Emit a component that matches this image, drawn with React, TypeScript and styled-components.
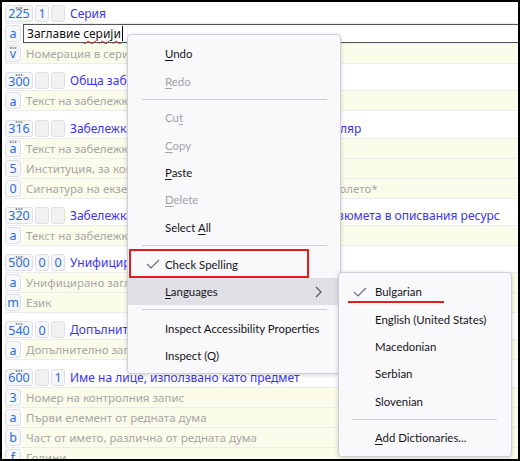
import React from "react";
import styled, { createGlobalStyle, css } from "styled-components";

const GlobalStyle = createGlobalStyle`
  html, body { margin: 0; padding: 0; background: #fff; }
  body { font-family: "Noto Sans", "Open Sans", sans-serif; }
  * { box-sizing: border-box; }
`;

const Frame = styled.div`
  position: relative;
  width: 520px;
  height: 461px;
  border: 2px solid #000;
  overflow: hidden;
  background: #fff;
`;

const Editor = styled.div`
  display: flex;
  flex-direction: column;
  padding: 2px 0 0 3px;
`;

const Group = styled.div`
  display: flex;
  flex-direction: column;
  & + & { margin-top: 7.3px; }
`;

const Row = styled.div`
  display: flex;
  align-items: center;
  gap: 2px;
  height: 20px;
  border-bottom: 1px solid #ececec;
`;

const Tag = styled.span<{ $w?: number; $dots?: boolean; $empty?: boolean }>`
  position: relative;
  display: flex;
  align-items: center;
  justify-content: center;
  flex: none;
  width: ${(p) => p.$w ?? 16}px;
  height: 17px;
  padding-top: 2px;
  border: 1px solid #dcdfe5;
  border-radius: 3px;
  background: ${(p) => (p.$empty ? "#f2f2f2" : "#f5f7fa")};
  color: #2f6bd6;
  font-size: 12.5px;
  line-height: 1;
  ${(p) =>
    p.$dots &&
    css`
      &::before {
        content: "";
        position: absolute;
        top: 0.5px;
        left: 50%;
        width: 8px;
        height: 2px;
        margin-left: -4px;
        background: radial-gradient(circle, #7a7a7a 0.75px, transparent 1.1px) 0 0 / 2.7px 2px repeat-x;
      }
    `}
`;

const Title = styled.span`
  margin-left: 3px;
  color: #3a34f0;
  font-size: 12px;
  white-space: nowrap;
`;

const SubText = styled.span`
  flex: 1;
  align-self: stretch;
  display: flex;
  align-items: center;
  padding-left: 3px;
  background: #fcfcea;
  color: #a6a6a6;
  font-size: 11.5px;
  white-space: nowrap;
`;

const InputBox = styled.div`
  flex: 1;
  align-self: stretch;
  display: flex;
  align-items: center;
  margin-right: -4px;
  padding-left: 3px;
  border: 1px solid #555;
  background: #fff;
  color: #111;
  font-size: 12px;
  white-space: nowrap;
`;

const Misspelled = styled.span`
  text-decoration: underline wavy #e02020;
  text-decoration-thickness: 1px;
  text-underline-offset: 2px;
`;

const Caret = styled.span`
  display: inline-block;
  width: 1px;
  height: 15px;
  margin-left: 1px;
  background: #000;
`;

const Menu = styled.div<{ $x: number; $y: number; $w: number }>`
  position: absolute;
  left: ${(p) => p.$x}px;
  top: ${(p) => p.$y}px;
  width: ${(p) => p.$w}px;
  padding: 5px 0 4px;
  background: #f9f9fb;
  border: 1px solid #cfcfd8;
  border-radius: 4px;
  box-shadow: 0 1px 4px rgba(0, 0, 0, 0.18);
  font-family: Lato, "Noto Sans", sans-serif;
  font-size: 11.4px;
`;

const Item = styled.div<{ $disabled?: boolean; $hover?: boolean; $pad: number }>`
  position: relative;
  display: flex;
  align-items: center;
  height: 27.4px;
  padding-left: ${(p) => p.$pad}px;
  color: ${(p) => (p.$disabled ? "#a3a3a8" : "#15141a")};
  background: ${(p) => (p.$hover ? "#e0e0e6" : "transparent")};
  white-space: nowrap;
`;

const Label = styled.span`
  white-space: pre;
`;

const Key = styled.u`
  text-underline-offset: 2px;
`;

const Sep = styled.div<{ $l: number; $r: number }>`
  height: 1px;
  margin: 4px ${(p) => p.$r}px 4.3px ${(p) => p.$l}px;
  background: #cfcfd4;
`;

const CheckIcon = styled.svg<{ $left: number }>`
  position: absolute;
  left: ${(p) => p.$left}px;
  top: 9px;
`;

const Chevron = styled.svg`
  position: absolute;
  right: 17px;
  top: 8px;
`;

const RedBox = styled.div`
  position: absolute;
  left: 127px;
  top: 247px;
  width: 180px;
  height: 29px;
  border: 2px solid #e41c1c;
`;

const RedLine = styled.div`
  position: absolute;
  left: 346px;
  top: 299px;
  width: 96px;
  height: 2px;
  background: #e41c1c;
`;

const Check = ({ left }: { left: number }) => (
  <CheckIcon $left={left} width="14" height="10" viewBox="0 0 14 10">
    <polyline points="1,5 5,9 13,1" fill="none" stroke="#6a6a70" strokeWidth="1.1" />
  </CheckIcon>
);

type Sub = { code: string; text: string; dots?: boolean };
type Field = { tag: string; ind: [string, string]; title: string; subs: Sub[] };

const fields: Field[] = [
  { tag: "300", ind: ["", ""], title: "Обща забележка", subs: [{ code: "a", text: "Текст на забележката" }] },
  {
    tag: "316",
    ind: ["", ""],
    title: "Забележка, отнасяща се до описвания екземпляр",
    subs: [
      { code: "a", text: "Текст на забележката", dots: true },
      { code: "5", text: "Институция, за която се отнася полето" },
      { code: "0", text: "Сигнатура на екземпляра, когато е различна от тази в полето*" },
    ],
  },
  {
    tag: "320",
    ind: ["", ""],
    title: "Забележка за наличието на библиография/резюмета в описвания ресурс",
    subs: [{ code: "a", text: "Текст на забележката" }],
  },
  {
    tag: "500",
    ind: ["0", "0"],
    title: "Унифицирано заглавие",
    subs: [
      { code: "a", text: "Унифицирано заглавие" },
      { code: "m", text: "Език" },
    ],
  },
  {
    tag: "540",
    ind: ["0", ""],
    title: "Допълнително заглавие, въведено от каталогизатора",
    subs: [{ code: "a", text: "Допълнително заглавие" }],
  },
  {
    tag: "600",
    ind: ["", "1"],
    title: "Име на лице, използвано като предмет",
    subs: [
      { code: "3", text: "Номер на контролния запис" },
      { code: "a", text: "Първи елемент от редната дума" },
      { code: "b", text: "Част от името, различна от редната дума" },
      { code: "f", text: "Години" },
    ],
  },
];

const FieldHead = ({ tag, ind, title }: { tag: string; ind: [string, string]; title: string }) => (
  <Row>
    <Tag $w={28} $dots>{tag}</Tag>
    <Tag $w={14} $empty={!ind[0]}>{ind[0]}</Tag>
    <Tag $w={14} $empty={!ind[1]}>{ind[1]}</Tag>
    <Title>{title}</Title>
  </Row>
);

export default function App() {
  return (
    <>
      <GlobalStyle />
      <Frame>
        <Editor>
          <Group>
            <FieldHead tag="225" ind={["1", ""]} title="Серия" />
            <Row>
              <Tag>a</Tag>
              <InputBox>
                Заглавие&nbsp;<Misspelled>серији</Misspelled>
                <Caret />
              </InputBox>
            </Row>
            <Row>
              <Tag $dots>v</Tag>
              <SubText>Номерация в серията</SubText>
            </Row>
          </Group>
          {fields.map((f) => (
            <Group key={f.tag}>
              <FieldHead tag={f.tag} ind={f.ind} title={f.title} />
              {f.subs.map((s, i) => (
                <Row key={i}>
                  <Tag $dots={s.dots}>{s.code}</Tag>
                  <SubText>{s.text}</SubText>
                </Row>
              ))}
            </Group>
          ))}
        </Editor>

        <Menu $x={125} $y={32} $w={214}>
          <Item $pad={37}><Label><Key>U</Key>ndo</Label></Item>
          <Item $pad={37} $disabled><Label><Key>R</Key>edo</Label></Item>
          <Sep $l={14} $r={13} />
          <Item $pad={37} $disabled><Label>Cu<Key>t</Key></Label></Item>
          <Item $pad={37} $disabled><Label><Key>C</Key>opy</Label></Item>
          <Item $pad={37}><Label><Key>P</Key>aste</Label></Item>
          <Item $pad={37} $disabled><Label><Key>D</Key>elete</Label></Item>
          <Item $pad={37}><Label>{"Select "}<Key>A</Key>ll</Label></Item>
          <Sep $l={14} $r={13} />
          <Item $pad={37}>
            <Check left={18} />
            <Label>Check Spelling</Label>
          </Item>
          <Item $pad={37} $hover>
            <Label><Key>L</Key>anguages</Label>
            <Chevron width="8" height="12" viewBox="0 0 8 12">
              <polyline points="1,1 6,6 1,11" fill="none" stroke="#55555a" strokeWidth="1.2" />
            </Chevron>
          </Item>
          <Sep $l={14} $r={13} />
          <Item $pad={37}><Label>Inspect Accessibility Properties</Label></Item>
          <Item $pad={37}><Label>Inspect (Q)</Label></Item>
        </Menu>

        <Menu $x={336} $y={270} $w={174}>
          <Item $pad={36}>
            <Check left={14} />
            <Label>Bulgarian</Label>
          </Item>
          <Item $pad={36}><Label>English (United States)</Label></Item>
          <Item $pad={36}><Label>Macedonian</Label></Item>
          <Item $pad={36}><Label>Serbian</Label></Item>
          <Item $pad={36}><Label>Slovenian</Label></Item>
          <Sep $l={14} $r={14} />
          <Item $pad={36}><Label><Key>A</Key>dd Dictionaries...</Label></Item>
        </Menu>

        <RedBox />
        <RedLine />
      </Frame>
    </>
  );
}
